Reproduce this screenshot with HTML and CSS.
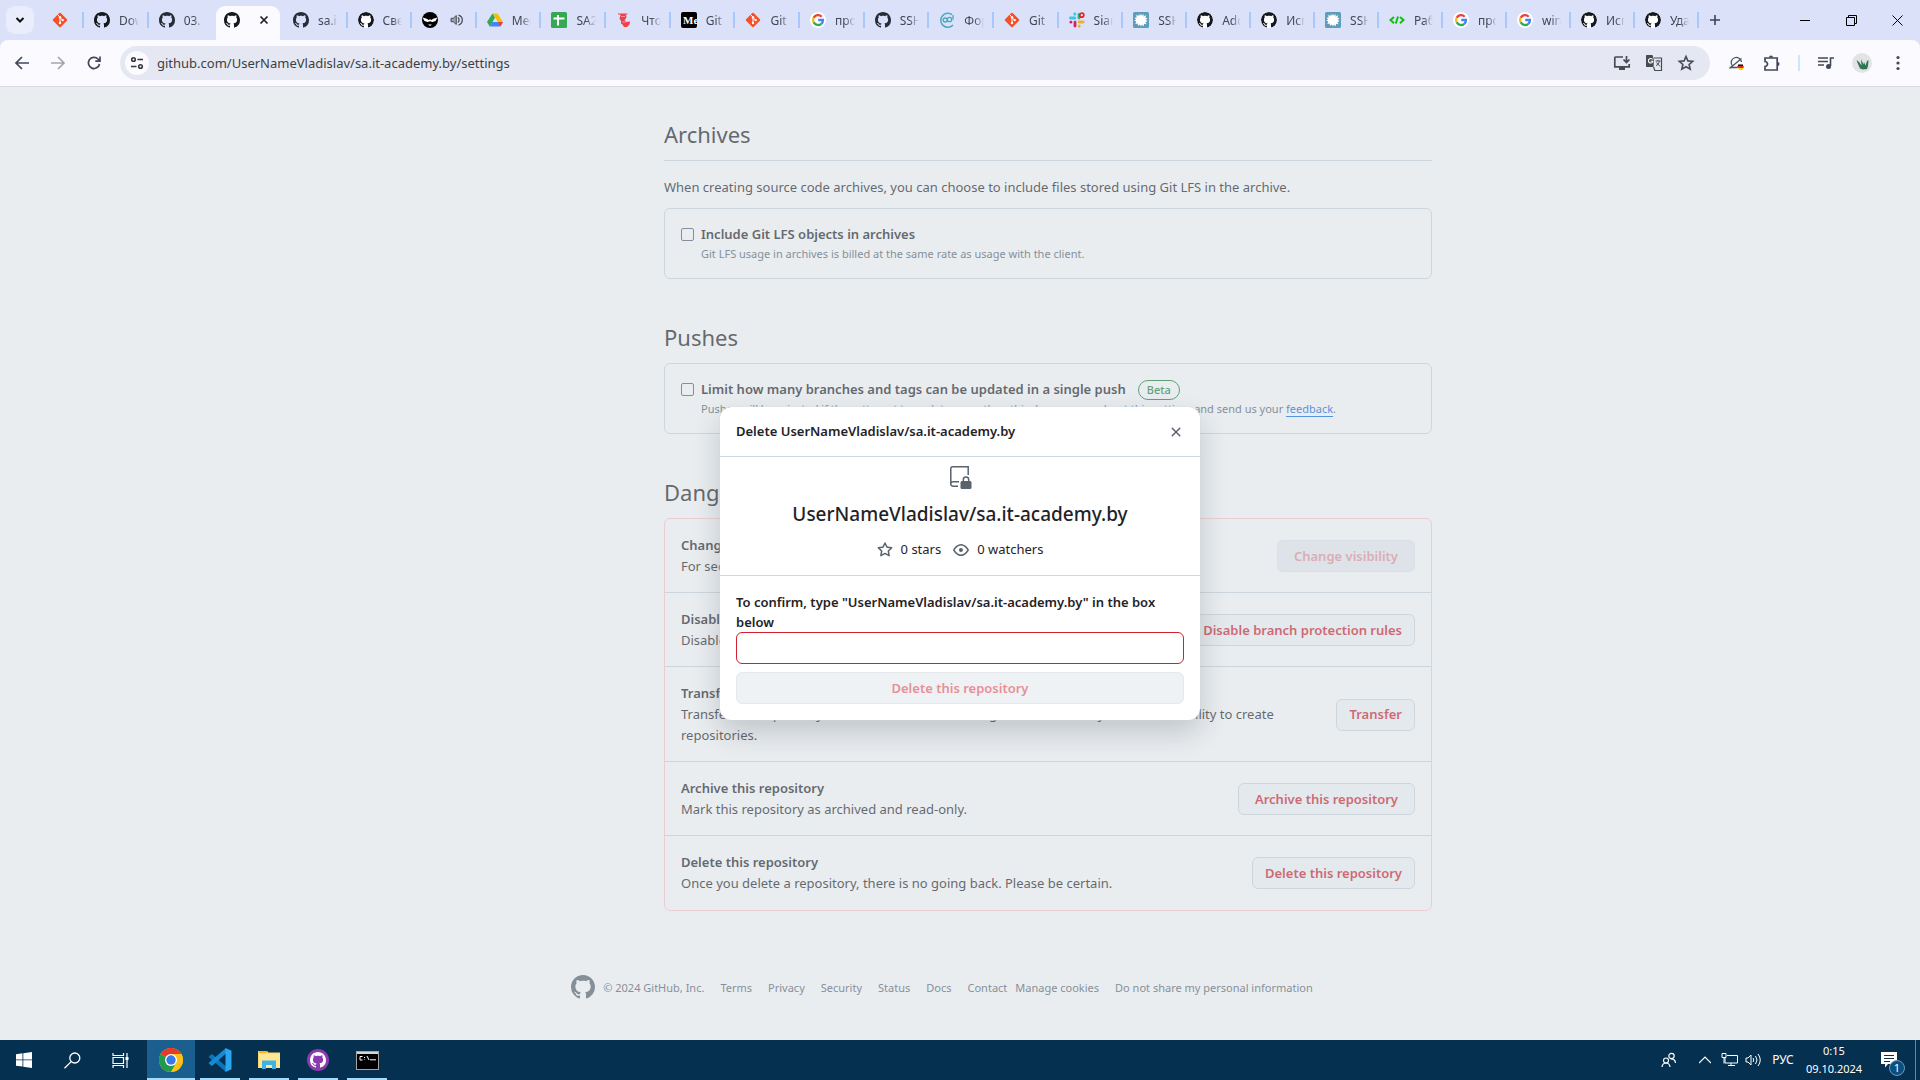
FILE: index.html
```html
<!DOCTYPE html>
<html lang="en">
<head>
<meta charset="utf-8">
<meta name="viewport" content="width=device-width, initial-scale=1">
<title>Settings · UserNameVladislav/sa.it-academy.by</title>
<link rel="stylesheet" href="styles.css">
</head>
<body>
<svg class="defs" aria-hidden="true">
  <symbol id="github" viewBox="0 0 16 16"><path fill="currentColor" d="M8 0c4.42 0 8 3.58 8 8a8.013 8.013 0 0 1-5.45 7.59c-.4.08-.55-.17-.55-.38 0-.27.01-1.13.01-2.2 0-.75-.25-1.23-.54-1.48 1.78-.2 3.65-.88 3.65-3.95 0-.88-.31-1.59-.82-2.15.08-.2.36-1.02-.08-2.12 0 0-.67-.22-2.2.82-.64-.18-1.32-.27-2-.27-.68 0-1.36.09-2 .27-1.53-1.03-2.2-.82-2.2-.82-.44 1.1-.16 1.92-.08 2.12-.51.56-.82 1.28-.82 2.15 0 3.06 1.86 3.75 3.64 3.95-.23.2-.44.55-.51 1.07-.46.21-1.61.55-2.33-.66-.15-.24-.6-.83-1.23-.82-.67.01-.27.38.01.53.34.19.73.9.82 1.13.16.45.68 1.31 2.69.94 0 .67.01 1.3.01 1.49 0 .21-.15.45-.55.38A7.995 7.995 0 0 1 0 8c0-4.42 3.58-8 8-8Z"/></symbol>
  <symbol id="git" viewBox="0 0 16 16"><rect x="2.6" y="2.6" width="10.8" height="10.8" rx="1" transform="rotate(45 8 8)" fill="#f4502a"/><path d="M5.7 2.7 8 5.2v6M8 5.5l2.6 2.6" stroke="#fff" stroke-width="1" fill="none"/><circle cx="8" cy="5.3" r="1.2" fill="#fff"/><circle cx="8" cy="11" r="1.2" fill="#fff"/><circle cx="10.7" cy="8.1" r="1.2" fill="#fff"/></symbol>
  <symbol id="google" viewBox="0 0 16 16"><circle cx="8" cy="8" r="8" fill="#fff"/><g fill="none" stroke-width="2.3"><path d="M11.7 4.7A5 5 0 0 0 3.6 5.8" stroke="#ea4335"/><path d="M3.6 5.8a5 5 0 0 0 0 4.5" stroke="#fbbc05"/><path d="M3.6 10.3a5 5 0 0 0 7.7 1.5" stroke="#34a853"/><path d="M11.3 11.8A5 5 0 0 0 13 8H8.2" stroke="#4285f4"/></g></symbol>
  <symbol id="sun" viewBox="0 0 16 16"><rect width="16" height="16" rx="1.5" fill="#5c9dba"/><path fill="#fff" d="m8 1.500.8 2.300L10.500 2l.2 2.400 2.600-1.300-1 2.600 2.400.3-1.900 1.800 1.900 1.400-2.400.7 1.300 2.400-2.600-.5-.1 2.500-2-1.500L8 14.500l-1.100-2-1.900 1.300-.3-2.400-2.500.5 1.200-2.300-2.300-.8 2-1.300-1.700-1.700 2.400-.4-1-2.300 2.600.9L5.600 2l1.500 1.800Z"/></symbol>
  <symbol id="star" viewBox="0 0 16 16"><path fill="currentColor" d="M8 .25a.75.75 0 0 1 .673.418l1.882 3.815 4.21.612a.75.75 0 0 1 .416 1.279l-3.046 2.97.719 4.192a.751.751 0 0 1-1.088.791L8 12.347l-3.766 1.98a.75.75 0 0 1-1.088-.79l.72-4.194L.818 6.374a.75.75 0 0 1 .416-1.28l4.21-.611L7.327.668A.75.75 0 0 1 8 .25Zm0 2.445L6.615 5.5a.75.75 0 0 1-.564.41l-3.097.45 2.24 2.184a.75.75 0 0 1 .216.664l-.528 3.084 2.769-1.456a.75.75 0 0 1 .698 0l2.77 1.456-.53-3.084a.75.75 0 0 1 .216-.664l2.24-2.183-3.096-.45a.75.75 0 0 1-.564-.41L8 2.694Z"/></symbol>
</svg>

<header class="browser">
  <div class="tabstrip">
    <button class="tab-search" aria-label="Search tabs"><svg width="10" height="10" viewBox="0 0 10 10"><path d="m1.500 3 3.500 3.500L8.500 3" fill="none" stroke="#111" stroke-width="2"/></svg></button>
    <div class="tab pinned"><svg class="fav"><use href="#git"/></svg></div>
    <div class="tabs">
      <div class="tab"><svg class="fav"><use href="#github"/></svg><span class="title">Download</span></div>
      <div class="tab no-rule"><svg class="fav slate"><use href="#github"/></svg><span class="title">03. Git</span></div>
      <div class="tab active"><svg class="fav"><use href="#github"/></svg><button class="tab-close" aria-label="Close tab"><svg width="10" height="10" viewBox="0 0 10 10"><path d="m1.500 1.500 7 7m0-7-7 7" stroke="#1f1f1f" stroke-width="1.700"/></svg></button></div>
      <div class="tab"><svg class="fav slate"><use href="#github"/></svg><span class="title">sa.it-academy</span></div>
      <div class="tab"><svg class="fav disc"><use href="#github"/></svg><span class="title">Сведения</span></div>
      <div class="tab"><svg class="fav" viewBox="0 0 16 16"><circle cx="8" cy="8" r="8"/><path fill="#fff" d="m.5 5.500 4.300 1.300L6.500 8 8 7.300 9.500 8l1.700-1.200 4.300-1.300-2 3.500-3 1L8 9.200l-2.500.8-3-1Z"/><path fill="#fff" d="M6 12.500h4L8 14Z"/></svg><svg class="speaker" width="13" height="12" viewBox="0 0 13 12"><path d="M1 4.300h2.200L6.300 1.500v9L3.200 7.700H1Z" fill="#9aa0ab" stroke="#4a5058"/><path d="M8 3.500a3.500 3.500 0 0 1 0 5M8.500 1a5.200 5.200 0 0 1 0 10" fill="none" stroke="#4a5058" stroke-width="1.300"/></svg></div>
      <div class="tab"><svg class="fav" viewBox="0 0 16 16"><path fill="#fbbc04" d="M5.500 1.500h5L16 10h-5Z"/><path fill="#34a853" d="M5.500 1.500 8 5.700 2.700 14.500 0 10Z"/><path fill="#4285f4" d="M5 10h11l-2.700 4.500H2.700Z"/><path fill="#ea4335" d="M11 10h5l-2.700 4.500Z"/></svg><span class="title">Мессенджер</span></div>
      <div class="tab"><svg class="fav" viewBox="0 0 16 16"><rect width="16" height="16" rx="1.500" fill="#34a853"/><path d="M7 3v10.500M2.500 6.500h11" stroke="#fff" stroke-width="2"/></svg><span class="title">SA2024</span></div>
      <div class="tab"><svg class="fav" viewBox="0 0 16 16"><path fill="#ef4048" d="M2 1.500h9.500v1H9.500l1 1.500-.5 2.500-1.500 1.500 2 2L14 9.500l-.5 3-2.500 2.500H8l-1.500-2.500L5 11.500V8.500L3.500 7l1-4.500H2Z"/><path d="M5 4.500h4M6 10h4" stroke="#fbb" stroke-width=".7"/></svg><span class="title">Что такое</span></div>
      <div class="tab"><svg class="fav" viewBox="0 0 16 16"><rect width="16" height="16" rx="2"/><text class="medium-mark" x="2" y="12">Me</text></svg><span class="title">Git</span></div>
      <div class="tab"><svg class="fav"><use href="#git"/></svg><span class="title">Git</span></div>
      <div class="tab"><svg class="fav"><use href="#google"/></svg><span class="title">проверка</span></div>
      <div class="tab"><svg class="fav slate"><use href="#github"/></svg><span class="title">SSH key</span></div>
      <div class="tab"><svg class="fav" viewBox="0 0 16 16" fill="none" stroke="#49a9bc"><path d="M13 2.700A7 7 0 1 0 14 13" stroke-width="1.500"/><path d="M14 3v4.500" stroke-width="1.300"/><circle cx="6.200" cy="8" r="2" stroke-width="1.300"/><circle cx="10.500" cy="7.500" r="2.200" stroke-width="1.300"/></svg><span class="title">Формат</span></div>
      <div class="tab"><svg class="fav"><use href="#git"/></svg><span class="title">Git</span></div>
      <div class="tab"><svg class="fav" viewBox="0 0 16 16" fill="none" stroke-width="2.800" stroke-linecap="round"><path d="M1.500 6h4.300M5.800 1.800v.5" stroke="#36c5f0"/><path d="M10 2.500V6" stroke="#2eb67d"/><path d="M10.200 10h4M10.200 14v.3" stroke="#ecb22e"/><path d="M6 10.200V14M1.800 10.200H2" stroke="#e01e5a"/><circle cx="12.800" cy="3.200" r="2" fill="#fff" stroke="#e3222c" stroke-width="1.800"/></svg><span class="title">Siarhei</span></div>
      <div class="tab"><svg class="fav"><use href="#sun"/></svg><span class="title">SSH key</span></div>
      <div class="tab"><svg class="fav disc"><use href="#github"/></svg><span class="title">Adding</span></div>
      <div class="tab"><svg class="fav disc"><use href="#github"/></svg><span class="title">Использ</span></div>
      <div class="tab"><svg class="fav"><use href="#sun"/></svg><span class="title">SSH key</span></div>
      <div class="tab"><svg class="fav" viewBox="0 0 16 16" fill="none" stroke="#10c010" stroke-width="2"><path d="M5 5 1.500 8 5 11.200M11 5l3.500 3L11 11.200M9 4.500l-2.200 7"/></svg><span class="title">Работа</span></div>
      <div class="tab"><svg class="fav"><use href="#google"/></svg><span class="title">проверка</span></div>
      <div class="tab"><svg class="fav"><use href="#google"/></svg><span class="title">windows</span></div>
      <div class="tab"><svg class="fav disc"><use href="#github"/></svg><span class="title">Использ</span></div>
      <div class="tab"><svg class="fav disc"><use href="#github"/></svg><span class="title">Удаление</span></div>
    </div>
    <button class="new-tab" aria-label="New tab"><svg width="12" height="12" viewBox="0 0 12 12"><path d="M6 1v10M1 6h10" stroke="#3b4354" stroke-width="1.600"/></svg></button>
    <div class="window-controls">
      <button aria-label="Minimize"><svg width="10" height="10" viewBox="0 0 10 10"><path d="M0 5.500h10" stroke="#000"/></svg></button>
      <button aria-label="Restore"><svg width="11" height="11" viewBox="0 0 11 11"><path d="M.5 2.500h8v8h-8zM2.500 2.500V.500h8v8h-2" fill="none" stroke="#000"/></svg></button>
      <button aria-label="Close"><svg width="11" height="11" viewBox="0 0 11 11"><path d="m.5.5 10 10m0-10-10 10" stroke="#000"/></svg></button>
    </div>
  </div>
  <div class="toolbar">
    <button class="nav" aria-label="Back"><svg width="16" height="16" viewBox="0 0 16 16"><path d="M15 8H2M8 2 2 8l6 6" fill="none" stroke="#414858" stroke-width="1.700"/></svg></button>
    <button class="nav" aria-label="Forward"><svg width="16" height="16" viewBox="0 0 16 16"><path d="M1 8h13M8 2l6 6-6 6" fill="none" stroke="#a3a6ad" stroke-width="1.700"/></svg></button>
    <button class="nav" aria-label="Reload"><svg width="16" height="16" viewBox="0 0 16 16"><path d="M13.500 9A5.600 5.600 0 1 1 12 4l1.800 1.800M14 1.500v4.700H9.300" fill="none" stroke="#414858" stroke-width="1.700"/></svg></button>
    <div class="omnibox">
      <button class="site-info" aria-label="Site information"><svg width="14" height="14" viewBox="0 0 14 14" fill="none" stroke="#33373f" stroke-width="1.600"><circle cx="3.500" cy="3.500" r="1.800"/><path d="M7.500 3.500H13M1 10.500h5.500"/><circle cx="10.500" cy="10.500" r="1.800"/></svg></button>
      <input class="url" aria-label="Address" value="github.com/UserNameVladislav/sa.it-academy.by/settings">
      <button class="box-icon" aria-label="Install"><svg width="18" height="18" viewBox="0 0 18 18"><path d="M10 3H2.500Q1.800 3 1.800 3.700v9.100h14.400V10M13.500 2v6M10.500 5.500l3 3 3-3" fill="none" stroke="#474b52" stroke-width="1.700"/><path d="M6 13h6v3H6z" fill="#474b52"/></svg></button>
      <button class="box-icon" aria-label="Translate"><svg width="18" height="18" viewBox="0 0 18 18"><path d="M1.500 1h6l3.500 12H1.500Q1 13 1 12.500v-11Q1 1 1.500 1Z" fill="#474b52"/><path d="M9 4h7.500v12.500H9.800L8.600 13" fill="#e6e8f2" stroke="#474b52" stroke-width="1.200"/><path d="M7.700 5.500A2.300 2.300 0 1 0 7.700 8V7.200H5.700" fill="none" stroke="#fff" stroke-width="1.100"/><path d="M10.500 7h5M13 6v1M14.500 7.200c-.7 2.500-2.300 3.800-3.500 4.500M11.500 8.500l3.500 4" stroke="#474b52" fill="none"/></svg></button>
      <button class="box-icon" aria-label="Bookmark"><svg width="18" height="18" viewBox="0 0 18 18"><path d="m9 2.500 1.900 4.400 4.800.4-3.600 3.200 1.100 4.700L9 12.700l-4.200 2.500 1.100-4.700-3.600-3.200 4.800-.4Z" fill="none" stroke="#474b52" stroke-width="1.600"/></svg></button>
    </div>
    <div class="extensions">
      <button aria-label="Extension"><svg width="18" height="18" viewBox="0 0 18 18"><path d="M14.500 8A5.200 5.200 0 1 0 5 11.500M2.500 14.500 14.500 4.500M2.500 13.500h8" fill="none" stroke="#4b5568" stroke-width="1.300"/><path d="M11 10.500h5v2h-5z"/><path d="M10.300 11.800h6.400v2.200h-6.400z" fill="#e0262b"/><path d="M11 13.900h5.400l-1.200 2h-3z" fill="#fc0"/></svg></button>
      <button aria-label="Extensions"><svg width="18" height="18" viewBox="0 0 18 18"><path d="M2 4h12.200v12H2v-3.500a2.500 2.500 0 0 0 0-5Z" fill="none" stroke="#414858" stroke-width="1.700"/><path d="M6 3.500a2 2 0 0 1 4 0zM14.500 8a2 2 0 0 1 0 4z" fill="#414858"/></svg></button>
      <span class="rule"></span>
      <button aria-label="Media controls"><svg width="18" height="18" viewBox="0 0 18 18"><path d="M1 4h10M1 7.500h10M1 11h6M13.500 12V4H17" fill="none" stroke="#414858" stroke-width="1.600"/><circle cx="11.500" cy="12.500" r="2.500" fill="#414858"/></svg></button>
      <button aria-label="Profile"><svg width="20" height="20" viewBox="0 0 20 20"><circle cx="10" cy="10" r="10" fill="#e2e3e4"/><path d="M4.500 7q3 1.500 5 5.500L9 6l2.500 5.500.5-2.500 1.500 3.500 1.500-4.500 1.500-1-.5 6-1 3-4 .5-3-1q-2-4-3.500-8.500Z" fill="#2f7556"/></svg></button>
      <button aria-label="Menu"><svg width="18" height="18" viewBox="0 0 18 18" fill="#414858"><circle cx="9" cy="3.500" r="1.600"/><circle cx="9" cy="9" r="1.600"/><circle cx="9" cy="14.500" r="1.600"/></svg></button>
    </div>
  </div>
</header>

<div class="viewport">
  <div class="page">
    <div class="layout">
      <main class="settings">
        <h2 class="ruled">Archives</h2>
        <p class="lead">When creating source code archives, you can choose to include files stored using Git LFS in the archive.</p>
        <div class="box option">
          <input type="checkbox" id="lfs">
          <div><label for="lfs">Include Git LFS objects in archives</label><p class="note">Git LFS usage in archives is billed at the same rate as usage with the client.</p></div>
        </div>

        <h2>Pushes</h2>
        <div class="box option">
          <input type="checkbox" id="limit">
          <div><div class="label-row"><label for="limit">Limit how many branches and tags can be updated in a single push</label><span class="beta">Beta</span></div><p class="note">Pushes will be rejected if they attempt to update more than this. <a href="#">Learn more about this setting</a>, and send us your <a href="#">feedback</a>.</p></div>
        </div>

        <h2>Danger Zone</h2>
        <ul class="box danger">
          <li><div><strong>Change repository visibility</strong><p>For security reasons, you cannot change the visibility of a fork.</p></div><button class="btn wide" disabled>Change visibility</button></li>
          <li><div><strong>Disable branch protection rules</strong><p>Disable branch protection rules enforcement and APIs</p></div><button class="btn">Disable branch protection rules</button></li>
          <li><div><strong>Transfer ownership</strong><p class="narrow">Transfer this repository to another user or to an organization where you have the ability to create repositories.</p></div><button class="btn">Transfer</button></li>
          <li><div><strong>Archive this repository</strong><p>Mark this repository as archived and read-only.</p></div><button class="btn wide">Archive this repository</button></li>
          <li><div><strong>Delete this repository</strong><p>Once you delete a repository, there is no going back. Please be certain.</p></div><button class="btn">Delete this repository</button></li>
        </ul>
      </main>
    </div>
    <footer class="footer">
      <svg class="mark"><use href="#github"/></svg>
      <span class="copyright">© 2024 GitHub, Inc.</span>
      <nav><a href="#">Terms</a><a href="#">Privacy</a><a href="#">Security</a><a href="#">Status</a><a href="#">Docs</a><a href="#">Contact</a></nav>
      <nav><button>Manage cookies</button><button>Do not share my personal information</button></nav>
    </footer>
  </div>

  <div class="backdrop">
    <section class="dialog" role="dialog" aria-modal="true" aria-labelledby="dialog-title">
      <header class="dialog-head">
        <h1 id="dialog-title">Delete UserNameVladislav/sa.it-academy.by</h1>
        <button class="close" aria-label="Close"><svg width="16" height="16" viewBox="0 0 16 16"><path fill="currentColor" d="M3.720 3.720a.75.75 0 0 1 1.060 0L8 6.940l3.220-3.220a.749.749 0 0 1 1.275.326.749.749 0 0 1-.215.734L9.060 8l3.220 3.220a.749.749 0 0 1-.326 1.275.749.749 0 0 1-.734-.215L8 9.060l-3.220 3.220a.751.751 0 0 1-1.042-.018.751.751 0 0 1-.018-1.042L6.940 8 3.720 4.780a.75.75 0 0 1 0-1.060Z"/></svg></button>
      </header>
      <div class="summary">
        <svg width="24" height="24" viewBox="0 0 24 24"><path d="M10 21.200H5A2.200 2.200 0 0 1 2.800 19V3.500q0-1.700 1.700-1.700h15.700V10M2.800 18.500q.5-1.700 2.200-1.700h6" fill="none" stroke="#59636e" stroke-width="1.500"/><path d="M15.300 17v-2.200a2.700 2.700 0 0 1 5.400 0V17" fill="none" stroke="#59636e" stroke-width="1.500"/><rect x="12.500" y="16" width="11" height="8" rx="1.500" fill="#59636e"/></svg>
        <p class="repo">UserNameVladislav/sa.it-academy.by</p>
        <div class="stats"><span><svg width="16" height="16"><use href="#star"/></svg>0 stars</span><span><svg width="16" height="16" viewBox="0 0 16 16"><path fill="currentColor" d="M8 2c1.981 0 3.671.992 4.933 2.078 1.270 1.091 2.187 2.345 2.637 3.023a1.620 1.620 0 0 1 0 1.798c-.45.678-1.367 1.932-2.637 3.023C11.670 13.008 9.981 14 8 14c-1.981 0-3.671-.992-4.933-2.078C1.797 10.830.88 9.576.43 8.898a1.620 1.620 0 0 1 0-1.798c.45-.677 1.367-1.931 2.637-3.022C4.330 2.992 6.019 2 8 2ZM1.679 7.932a.12.12 0 0 0 0 .136c.411.622 1.241 1.750 2.366 2.717C5.176 11.758 6.527 12.500 8 12.500c1.473 0 2.825-.742 3.955-1.715 1.124-.967 1.954-2.096 2.366-2.717a.12.12 0 0 0 0-.136c-.412-.621-1.242-1.750-2.366-2.717C10.824 4.242 9.473 3.500 8 3.500c-1.473 0-2.825.742-3.955 1.715-1.124.967-1.954 2.096-2.366 2.717ZM8 10a2 2 0 1 1-.001-3.999A2 2 0 0 1 8 10Z"/></svg>0 watchers</span></div>
      </div>
      <form class="confirm">
        <label for="confirm">To confirm, type "UserNameVladislav/sa.it-academy.by" in the box below</label>
        <input id="confirm" type="text">
        <button class="btn" type="button" disabled>Delete this repository</button>
      </form>
    </section>
  </div>
</div>

<footer class="taskbar">
  <button aria-label="Start"><svg width="16" height="16" viewBox="0 0 16 16" fill="#fff"><path d="M0 2.200 6.500 1.300v6.200H0zM7.300 1.200 16 0v7.500H7.300zM0 8.300h6.500v6.300L0 13.700zM7.300 8.300H16V16l-8.700-1.200z"/></svg></button>
  <button aria-label="Search"><svg width="17" height="17" viewBox="0 0 17 17" fill="none" stroke="#fff" stroke-width="1.300"><circle cx="10.800" cy="6" r="5"/><path d="m7.200 9.600-6.700 6.700"/></svg></button>
  <button aria-label="Task view"><svg width="17" height="17" viewBox="0 0 17 17" fill="none" stroke="#fff" stroke-width="1.200"><path d="M1 1v2.500h10.500V1M1 16v-2.500h10.500V16M1 5.500h10.500v6H1zM15 1v15"/><path d="M13.500 5h3v3h-3z" fill="#fff" stroke="none"/></svg></button>
  <button class="app current" aria-label="Chrome"><svg width="24" height="24" viewBox="0 0 24 24"><circle cx="12" cy="12" r="12" fill="#fbc116"/><path d="M12 12 1.600 6A12 12 0 0 1 22.400 6Z" fill="#e33b2e"/><path d="M12 12 1.600 6A12 12 0 0 0 12 24l5.200-9Z" fill="#229a4b"/><path d="M12 6h10.400A12 12 0 0 1 12 24l5.200-9Z" fill="#fbc116"/><circle cx="12" cy="12" r="6" fill="#fff"/><circle cx="12" cy="12" r="4.700" fill="#3579ea"/></svg></button>
  <button class="app" aria-label="Visual Studio Code"><svg width="24" height="24" viewBox="0 0 24 24"><path d="m2 7.500 2-1.400 14 12.400V24L.5 9Z" fill="#0b76bd"/><path d="m2 16.500 2 1.400L18 5.500V0L.5 15Z" fill="#168bd4"/><path d="m17.500 0 6 2.800v18.400l-6 2.800Z" fill="#2ba5f0"/></svg></button>
  <button class="app" aria-label="File Explorer"><svg width="22" height="20" viewBox="0 0 22 20"><path d="M0 1h9l1.500 1.500H22V18H0Z" fill="#fbd66b"/><path d="M1 3.500h21V18H1Z" fill="#fee694"/><path d="M1 1h8v2H1z" fill="#f5b91d"/><path d="M4 19v-8.500h14V19h-4v-4H8v4Z" fill="#3fb3e6"/></svg></button>
  <button class="app" aria-label="GitHub Desktop"><svg width="22" height="22" viewBox="0 0 22 22"><circle cx="11" cy="11" r="11" fill="#8a3bb0"/><svg class="white" x="3" y="3" width="16" height="16"><use href="#github"/></svg></svg></button>
  <button class="app" aria-label="Command Prompt"><svg width="23" height="19" viewBox="0 0 23 19"><rect x=".5" y=".5" width="22" height="18" fill="#000" stroke="#a5a5a5"/><path d="M1 1h21v2H1z" fill="#d5d5d5"/><path d="M6.500 5.500H4v3.500h2.500M8.500 6v1m0 1.500v.5M11 5l2 4M14 8.800h6" stroke="#fff" fill="none"/></svg></button>
  <div class="tray">
    <button aria-label="People"><svg width="16" height="16" viewBox="0 0 16 16" fill="none" stroke="#fff" stroke-width="1.200"><circle cx="10.500" cy="4" r="2.700"/><circle cx="5" cy="8.500" r="2.500"/><path d="M1 15q.5-4 4-4t4 4M9.500 7q4.500-.5 5 4"/></svg></button>
    <button aria-label="Show hidden icons"><svg width="12" height="12" viewBox="0 0 12 12"><path d="m0 9 6-6 6 6" fill="none" stroke="#fff" stroke-width="1.200"/></svg></button>
    <button aria-label="Network"><svg width="17" height="14" viewBox="0 0 17 14" fill="none" stroke="#fff"><path d="M6 2.500h10.500v7.500H4V5M7 12.500h7M10 10v2.500M1 .500h4v4H1zM3 4.500v6"/></svg></button>
    <button aria-label="Volume"><svg width="17" height="14" viewBox="0 0 17 14" fill="none" stroke="#fff"><path d="M1 5h2l3-3v10L3 9H1ZM8 5q1.500 2 0 4M10.500 3q3 4 0 8M13 1q4.500 6 0 12"/></svg></button>
    <button class="lang">РУС</button>
    <button class="clock"><time>0:15</time><time>09.10.2024</time></button>
    <button class="notices" aria-label="Notifications"><svg width="16" height="16" viewBox="0 0 16 16"><path d="M0 0h16v12H7l-3 3.500V12H0Z" fill="#fff"/><path d="M3 3.500h10M3 6.500h10M3 9.500h6" stroke="#06304f"/></svg><span class="badge">1</span></button>
  </div>
</footer>
</body>
</html>
```
FILE: styles.css
```css
* { box-sizing: border-box; }
html, body { height: 100%; }
body {
  margin: 0;
  display: flex;
  flex-direction: column;
  overflow: hidden;
  font: 13px/21px "Noto Sans", "Open Sans", sans-serif;
  color: #1f2328;
}
h1, h2, p, ul { margin: 0; padding: 0; }
button, input { font: inherit; color: inherit; }
button { border: 0; padding: 0; background: none; }
svg { display: block; flex: none; }
.defs { position: absolute; width: 0; height: 0; }

/* Browser frame */
.browser { flex: none; background: #dae1f9; }
.tabstrip { display: flex; align-items: flex-start; height: 40px; }
.tab-search {
  display: grid;
  place-items: center;
  width: 28px;
  height: 28px;
  margin: 6px 8px 0 6px;
  border-radius: 9px;
  background: #eaeefc;
}
.tabs { display: flex; flex: 1; min-width: 0; }
.tab {
  position: relative;
  display: flex;
  align-items: center;
  gap: 9px;
  flex: 64;
  min-width: 0;
  height: 28px;
  margin-top: 6px;
  padding: 0 10px;
}
.tab:nth-child(-n+16) { flex: 65; }
.tab::after {
  content: "";
  position: absolute;
  right: 0;
  top: 6px;
  width: 2px;
  height: 16px;
  background: #a8c7fa;
}
.tabstrip > .pinned { flex: 0 0 42px; }
.tab.no-rule::after, .tab.active::after { display: none; }
.tab.active {
  justify-content: space-between;
  height: 34px;
  margin: 6px 3px 0;
  padding: 0 11px 6px 8px;
  border-radius: 9px 9px 0 0;
  background: #fafaff;
}
.tab-close { display: grid; place-items: center; }
.fav { width: 16px; height: 16px; color: #14181f; }
.fav.slate { color: #252d38; }
.fav.disc { border-radius: 50%; background: #fff; }
.medium-mark { font: 700 11px "Liberation Serif", serif; fill: #fff; }
.speaker { margin-left: 3px; }
.title {
  flex: 1;
  min-width: 0;
  overflow: hidden;
  white-space: nowrap;
  font-size: 12px;
  color: #414754;
  -webkit-mask-image: linear-gradient(to right, #000 50%, transparent);
  mask-image: linear-gradient(to right, #000 50%, transparent);
}
.new-tab { display: grid; place-items: center; width: 32px; height: 40px; margin-right: 51px; }
.window-controls { display: flex; }
.window-controls button { display: grid; place-items: center; width: 46px; height: 40px; }

.toolbar {
  display: flex;
  align-items: center;
  height: 47px;
  padding: 0 4px;
  border-bottom: 1px solid #d8dbe4;
  border-radius: 8px 8px 0 0;
  background: #fafaff;
}
.nav { display: grid; place-items: center; width: 36px; height: 34px; }
.omnibox {
  display: flex;
  align-items: center;
  flex: 1;
  height: 34px;
  margin-left: 8px;
  padding: 0 8px 0 5px;
  border-radius: 17px;
  background: #e5e8f3;
}
.site-info { display: grid; place-items: center; width: 24px; height: 24px; border-radius: 50%; background: #fafaff; }
.url { flex: 1; min-width: 0; padding: 0 8px; border: 0; background: none; color: #3c4043; }
.box-icon { display: grid; place-items: center; width: 32px; height: 32px; }
.extensions { display: flex; align-items: center; padding-left: 8px; }
.extensions button { display: grid; place-items: center; width: 36px; height: 34px; }
.rule { width: 2px; height: 16px; margin: 0 8px; background: #d3e3fd; }

/* Page */
.viewport { position: relative; flex: 1; min-height: 0; overflow: hidden; background: #fff; }
.page { padding-top: 29px; }
.layout { display: grid; grid-template-columns: 296px 1fr; gap: 24px; max-width: 1232px; margin: 0 auto; }
.settings { grid-column: 2; max-width: 768px; }
h2 { margin: 40px 0 8px; font-size: 22px; line-height: 36px; font-weight: 400; }
h2.ruled { margin: 0 0 16px; padding-bottom: 8px; border-bottom: 1px solid #d1d9e0; }
.lead { margin-bottom: 10px; }
.box { border: 1px solid #d1d9e0; border-radius: 6px; }
.option { display: flex; gap: 7px; padding: 15px 16px; }
.option input {
  appearance: none;
  flex: none;
  width: 13px;
  height: 13px;
  margin: 4px 0 0;
  border: 1px solid #59636e;
  border-radius: 2px;
  background: #fff;
}
.option label { font-weight: 600; }
.label-row { display: flex; align-items: center; gap: 12px; }
.note { font-size: 11px; line-height: 18px; color: #59636e; }
.note a { color: #0969da; text-underline-offset: 3px; }
.beta {
  padding: 0 8px;
  border: 1px solid #1a7f37;
  border-radius: 10px;
  font-size: 11px;
  line-height: 18px;
  font-weight: 500;
  color: #1a7f37;
}
.danger { list-style: none; border-color: #ffcdcd; }
.danger li { display: flex; align-items: center; justify-content: space-between; gap: 16px; padding: 16px 16px 15px; }
.danger li + li { border-top: 1px solid #d1d9e0; }
.danger li:last-child { padding-bottom: 16px; }
.danger strong { font-weight: 600; }
.narrow { max-width: 620px; }
.btn {
  flex: none;
  height: 32px;
  padding: 0 12px;
  border: 1px solid #d1d9e0;
  border-radius: 6px;
  background: #f6f8fa;
  font-weight: 600;
  white-space: nowrap;
  color: #d1242f;
}
.btn.wide { padding: 0 16px; }
.danger .btn:disabled { border-color: #e4e6f0; background: #edeef6; color: #e8949a; }
.footer {
  display: flex;
  align-items: center;
  justify-content: center;
  margin-top: 64px;
  padding-right: 36px;
  font-size: 11px;
  color: #59636e;
}
.mark { width: 24px; height: 24px; }
.copyright { margin: 0 16px 0 8px; }
.footer nav { display: flex; gap: 16px; }
.footer nav + nav { margin-left: 8px; }
.footer a { color: inherit; text-decoration: none; }

/* Delete dialog */
.backdrop {
  position: absolute;
  inset: 0;
  display: flex;
  align-items: center;
  justify-content: center;
  background: rgba(200, 209, 218, 0.4);
}
.dialog {
  width: 480px;
  border-radius: 12px;
  background: #fff;
  box-shadow: 0 0 0 1px rgba(209, 217, 224, 0.3), 0 12px 28px rgba(37, 41, 46, 0.2);
}
.dialog-head { display: flex; align-items: center; justify-content: space-between; padding: 14px 16px; border-bottom: 1px solid #d1d9e0; }
.dialog-head h1 { font-size: 13px; line-height: 21px; font-weight: 600; }
.close { color: #59636e; }
.summary { display: flex; flex-direction: column; align-items: center; padding: 8px 16px 15px; border-bottom: 1px solid #d1d9e0; }
.repo { margin: 10px 0; font-size: 19px; line-height: 30px; font-weight: 500; }
.stats { display: flex; gap: 12px; }
.stats span { display: flex; align-items: center; gap: 8px; }
.stats svg { color: #59636e; }
.confirm { display: flex; flex-direction: column; padding: 16px; }
.confirm label { line-height: 20px; font-weight: 600; }
.confirm input { height: 32px; padding: 0 12px; border: 1px solid #cf222e; border-radius: 6px; background: #fff; }
.confirm .btn { margin-top: 8px; border-color: #e5e9ed; background: #eff2f5; color: #e88f96; }

/* Taskbar */
.taskbar { display: flex; flex: none; height: 40px; background: #06304f; color: #fff; }
.taskbar button { display: grid; place-items: center; }
.taskbar > button { width: 48px; }
.taskbar > .app { position: relative; margin-right: 1px; }
.taskbar > .current { margin-left: 3px; background: #1a5f8e; }
.app::after { content: ""; position: absolute; left: 4px; right: 4px; bottom: 0; height: 2px; background: #a6dcfb; }
.app.current::after { left: 0; right: 0; }
.white { color: #fff; }
.tray { display: flex; margin-left: auto; padding-right: 4px; font-size: 11px; line-height: 18px; }
.tray button { width: 24px; }
.tray button:first-child { margin-right: 12px; }
.tray .lang { width: 36px; font-size: 12px; }
.tray .clock { width: 66px; align-content: center; }
.tray .notices { position: relative; width: 44px; margin-right: 4px; }
.badge {
  position: absolute;
  right: 6px;
  bottom: 4px;
  width: 16px;
  height: 16px;
  border: 1px solid #6f9ab8;
  border-radius: 50%;
  background: #0b4f80;
  line-height: 14px;
}
.tray::after { content: ""; width: 1px; background: #6a869b; }
```
